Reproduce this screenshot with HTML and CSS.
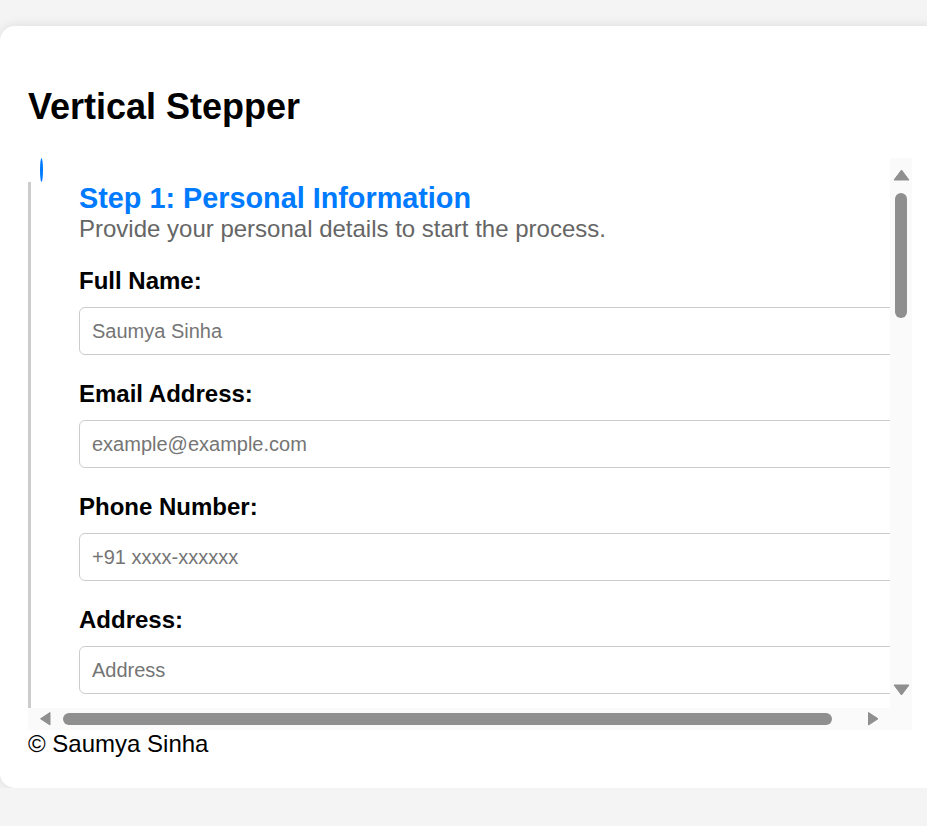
FILE: index.html
```html
<!DOCTYPE html>
<html lang="en">
<head>
<meta charset="utf-8">
<title>Vertical Stepper</title>
<link rel="stylesheet" href="styles.css">
</head>
<body>
<main class="card">
  <h1 class="title">Vertical Stepper</h1>
  <div class="scroll-frame">
    <div class="scroll-view">
      <div class="stepper">
        <section class="step">
          <span class="step-dot"></span>
          <h2 class="step-title">Step 1: Personal Information</h2>
          <p class="step-desc">Provide your personal details to start the process.</p>
          <div class="field">
            <label class="field-label" for="name">Full Name:</label>
            <input class="field-input" id="name" type="text" placeholder="Saumya Sinha">
          </div>
          <div class="field">
            <label class="field-label" for="email">Email Address:</label>
            <input class="field-input" id="email" type="email" placeholder="example@example.com">
          </div>
          <div class="field">
            <label class="field-label" for="phone">Phone Number:</label>
            <input class="field-input" id="phone" type="tel" placeholder="+91 xxxx-xxxxxx">
          </div>
          <div class="field">
            <label class="field-label" for="address">Address:</label>
            <input class="field-input" id="address" type="text" placeholder="Address">
          </div>
        </section>
      </div>
    </div>
    <div class="vbar" aria-hidden="true">
      <div class="sb-btn sb-btn-v">
        <svg width="22" height="30" viewBox="0 0 22 30"><polygon points="4,22 11.5,12 19,22" fill="#8f8f8f" stroke="#8f8f8f" stroke-width="1" stroke-linejoin="round"/></svg>
      </div>
      <div class="sb-track sb-track-v"><div class="sb-thumb sb-thumb-v"></div></div>
      <div class="sb-btn sb-btn-v">
        <svg width="22" height="30" viewBox="0 0 22 30"><polygon points="4,7 19,7 11.5,17" fill="#8f8f8f" stroke="#8f8f8f" stroke-width="1" stroke-linejoin="round"/></svg>
      </div>
    </div>
    <div class="hbar" aria-hidden="true">
      <div class="sb-btn sb-btn-h">
        <svg width="30" height="22" viewBox="0 0 30 22"><polygon points="22,4.5 22,17 12.5,10.75" fill="#8f8f8f" stroke="#8f8f8f" stroke-width="1" stroke-linejoin="round"/></svg>
      </div>
      <div class="sb-track sb-track-h"><div class="sb-thumb sb-thumb-h"></div></div>
      <div class="sb-btn sb-btn-h">
        <svg width="30" height="22" viewBox="0 0 30 22"><polygon points="8.5,4.5 8.5,17 18,10.75" fill="#8f8f8f" stroke="#8f8f8f" stroke-width="1" stroke-linejoin="round"/></svg>
      </div>
    </div>
    <div class="sb-corner"></div>
  </div>
  <footer class="footer">© Saumya Sinha</footer>
</main>
</body>
</html>
```
FILE: styles.css
```css
html {
  overflow: hidden;
}
body {
  margin: 0;
  background: #f4f4f4;
  font-family: "Liberation Sans", Arial, sans-serif;
  color: #000;
}
.card {
  box-sizing: border-box;
  width: 940px;
  margin-top: 26px;
  padding: 60px 28px 31px;
  background: #fff;
  border-radius: 15px;
  box-shadow: 0 0 12px rgba(0, 0, 0, 0.1);
}
.title {
  margin: 0 0 31px;
  font-size: 36px;
  line-height: 41px;
  font-weight: bold;
}
.scroll-frame {
  display: grid;
  grid-template-columns: 1fr 22px;
  grid-template-rows: 550px 22px;
}
.scroll-view {
  overflow: hidden;
  min-width: 0;
}
.vbar {
  display: flex;
  flex-direction: column;
  background: #fafafa;
}
.hbar {
  display: flex;
  background: #fafafa;
}
.sb-corner {
  background: #fafafa;
}
.sb-btn {
  flex: none;
  display: flex;
}
.sb-btn-v {
  height: 30px;
}
.sb-btn-h {
  width: 30px;
}
.sb-track {
  flex: 1;
  display: flex;
}
.sb-track-v {
  flex-direction: column;
  padding: 5px 5px 0;
}
.sb-track-h {
  padding: 5px 0 5px 5px;
}
.sb-thumb {
  background: #8f8f8f;
  border-radius: 7px;
}
.sb-thumb-v {
  height: 125px;
  width: 12px;
  margin: 0 auto;
}
.sb-thumb-h {
  width: 769px;
  height: 12px;
}
.stepper {
  padding: 0 0 84px;
}
.step {
  position: relative;
  margin-top: 24px;
  padding: 0 0 40px 48px;
  border-left: 3px solid #ccc;
}
.step-dot {
  position: absolute;
  top: -24px;
  left: 9px;
  width: 3px;
  height: 24px;
  border-radius: 50%;
  background: #007bff;
}
.step-title {
  margin: 0;
  font-size: 28.8px;
  line-height: 33px;
  font-weight: bold;
  color: #007bff;
}
.step-desc {
  margin: 0;
  font-size: 24px;
  line-height: 27px;
  color: #666;
}
.field {
  margin-top: 25px;
}
.field-label {
  display: block;
  margin-bottom: 13px;
  font-size: 24px;
  line-height: 27px;
  font-weight: bold;
}
.field-input {
  display: block;
  width: 100%;
  margin: 0;
  padding: 11.5px 12px;
  border: 1px solid #ccc;
  border-radius: 6px;
  font-family: "Liberation Sans", Arial, sans-serif;
  font-size: 20px;
  line-height: 23px;
  height: 23px;
  color: #000;
  background: #fff;
}
.field-input::placeholder {
  color: #757575;
}
.footer {
  font-size: 24px;
  line-height: 27px;
}
```
